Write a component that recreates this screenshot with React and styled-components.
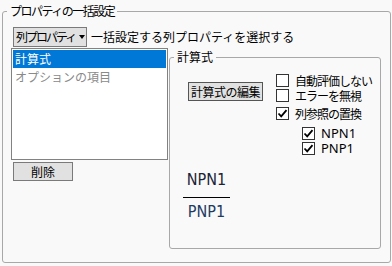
import styled, { createGlobalStyle } from 'styled-components';

const GlobalStyle = createGlobalStyle`
  html, body {
    margin: 0;
    background: #f9f9f9;
  }
  body {
    padding: 2px 0 0 2px;
    font-family: "Noto Sans CJK JP", "Noto Sans", sans-serif;
    font-size: 12px;
    color: #000;
  }
`;

const Group = styled.fieldset`
  box-sizing: border-box;
  margin: 0;
  padding: 0;
  min-width: 0;
  width: ${p => p.$width}px;
  border: 1px solid #a8a8a8;
  border-radius: 3px;
`;

const Title = styled.legend`
  margin-left: 4px;
  padding: 0 3px;
  font-size: 12px;
  line-height: 18px;
  letter-spacing: ${p => p.$ls || 0}px;
`;

const Body = styled.div`
  padding: 7px 9px 13px 8px;
`;

const TopRow = styled.div`
  display: flex;
  align-items: center;
  gap: 4px;
  margin-left: 2px;
  line-height: 18px;
`;

const Dropdown = styled.div`
  box-sizing: border-box;
  display: flex;
  align-items: center;
  gap: 4px;
  width: 74px;
  height: 20px;
  padding: 0 2px;
  background: #e1e1e1;
  border: 1px solid #7a7a7a;
  line-height: 18px;
  white-space: nowrap;
`;

const DropText = styled.span`
  letter-spacing: -2px;
`;

const Caret = styled.span`
  width: 0;
  height: 0;
  border-left: 3.5px solid transparent;
  border-right: 3.5px solid transparent;
  border-top: 4px solid #000;
`;

const Main = styled.div`
  display: flex;
  gap: 1px;
  margin-top: 1px;
`;

const LeftCol = styled.div`
  display: flex;
  flex-direction: column;
  align-items: flex-start;
  gap: 2px;
`;

const List = styled.div`
  box-sizing: border-box;
  width: 157px;
  height: 112px;
  padding: 1px;
  background: #fff;
  border: 1px solid #828282;
`;

const Item = styled.div`
  height: 18px;
  line-height: 18px;
  padding-left: 2px;
  background: ${p => (p.$selected ? '#0078d7' : 'transparent')};
  color: ${p => (p.$selected ? '#fff' : '#8a8a8a')};
`;

const Button = styled.div`
  box-sizing: border-box;
  display: flex;
  align-items: center;
  justify-content: center;
  width: ${p => p.$width}px;
  height: 19px;
  background: #e1e1e1;
  border: 1px solid ${p => p.$border || '#7a7a7a'};
  line-height: 17px;
  margin-left: ${p => p.$ml || 0}px;
  margin-top: ${p => p.$mt || 0}px;
  white-space: nowrap;
  letter-spacing: ${p => p.$ls || 0}px;
`;

const InnerBody = styled.div`
  padding: 7px 0 26px 0;
`;

const Controls = styled.div`
  display: flex;
  align-items: flex-start;
  gap: 13px;
`;

const Checks = styled.div`
  display: flex;
  flex-direction: column;
`;

const CheckRow = styled.div`
  display: flex;
  align-items: center;
  gap: 6px;
  height: 15px;
  line-height: 15px;
  margin-top: ${p => p.$mt || 0}px;
  margin-left: ${p => (p.$indent ? 26 : 0)}px;
  white-space: nowrap;
  letter-spacing: -1px;
`;

const Box = styled.span`
  box-sizing: border-box;
  display: flex;
  align-items: center;
  justify-content: center;
  width: 13px;
  height: 13px;
  background: #fff;
  border: 1px solid #333;
  flex: none;
`;

const Latin = styled.span`
  font-family: "Noto Sans", sans-serif;
  font-size: 13px;
  letter-spacing: 0;
`;

const Formula = styled.div`
  display: flex;
  flex-direction: column;
  align-items: center;
  width: 47px;
  margin: 14px 0 0 13px;
  font-family: "DejaVu Sans", sans-serif;
  font-stretch: condensed;
  font-size: 16px;
  line-height: 20px;
`;

const Term = styled.div`
  color: ${p => p.$color};
`;

const Bar = styled.div`
  align-self: stretch;
  height: 1px;
  background: #000;
  margin: ${p => p.$m};
`;

const Check = ({ checked, indent, mt, children }) => (
  <CheckRow $indent={indent} $mt={mt}>
    <Box>
      {checked && (
        <svg width="11" height="11" viewBox="0 0 11 11">
          <path d="M1.5 5.5 L4.2 8.3 L9.5 2.2" fill="none" stroke="#000" strokeWidth="1.8" />
        </svg>
      )}
    </Box>
    {children}
  </CheckRow>
);

export default function App() {
  return (
    <>
      <GlobalStyle />
      <Group $width={389}>
        <Title $ls={-1.5}>プロパティの一括設定</Title>
        <Body>
          <TopRow>
            <Dropdown>
              <DropText>列プロパティ</DropText>
              <Caret />
            </Dropdown>
            <span>一括設定する列プロパティを選択する</span>
          </TopRow>
          <Main>
            <LeftCol>
              <List>
                <Item $selected>計算式</Item>
                <Item>オプションの項目</Item>
              </List>
              <Button $width={60} $ml={2}>削除</Button>
            </LeftCol>
            <Group $width={212}>
              <Title>計算式</Title>
              <InnerBody>
                <Controls>
                  <Button $width={75} $ml={18} $mt={9} $border="#555" $ls={-0.5}>計算式の編集</Button>
                  <Checks>
                    <Check>自動評価しない</Check>
                    <Check>エラーを無視</Check>
                    <Check checked mt={3}>列参照の置換</Check>
                    <Check checked indent mt={5}><Latin>NPN1</Latin></Check>
                    <Check checked indent><Latin>PNP1</Latin></Check>
                  </Checks>
                </Controls>
                <Formula>
                  <Term $color="#1b2436">NPN1</Term>
                  <Bar $m="7px 0 4px" />
                  <Term $color="#1d3a62">PNP1</Term>
                </Formula>
              </InnerBody>
            </Group>
          </Main>
        </Body>
      </Group>
    </>
  );
}
